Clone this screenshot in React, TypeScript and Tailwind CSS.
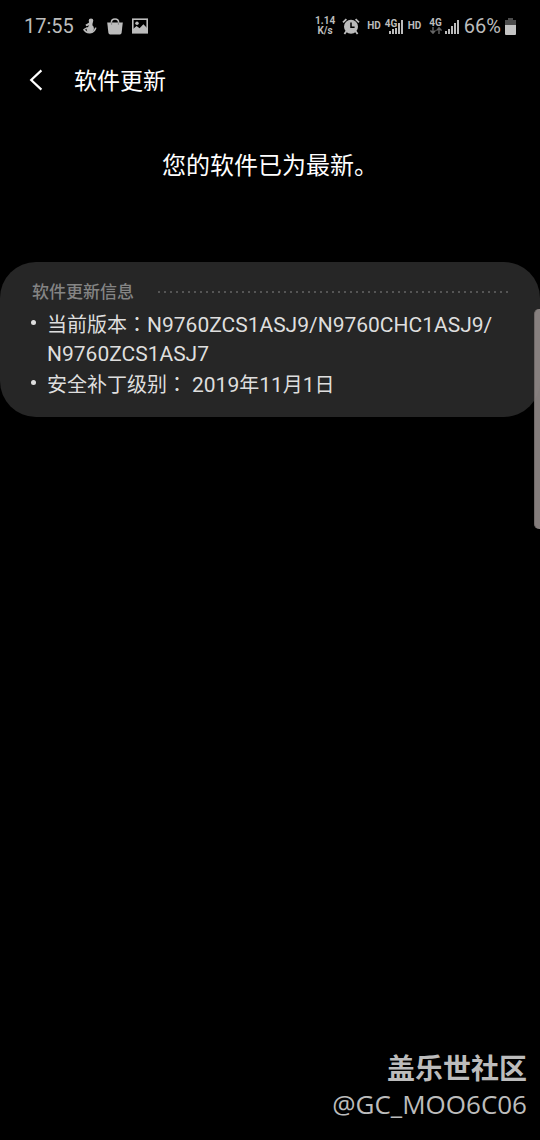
import type { ReactNode } from "react";

const signalBars = [3, 5, 8, 11, 14];

function MascotIcon() {
  return (
    <svg className="h-4 w-4" viewBox="0 0 16 16" fill="currentColor" aria-hidden="true">
      <circle cx="9" cy="2.8" r="2.3" />
      <path d="M7.4 3.6H10.8L10.4 7.2C12.2 8.6 12.6 11.6 10.8 13.6L8.6 15H7L5.2 13.6C4 11.8 4.6 9.8 6.4 8.6L7.2 7.2 4.4 8.2 3.4 6.8 6.8 4.8Z" />
      <path d="M1.8 11.4C4.2 15.8 12 16.2 13.8 9.6" fill="none" stroke="currentColor" strokeWidth="1.6" />
      <path d="M1.6 11.8 5.4 9.6" stroke="currentColor" strokeWidth="1.3" />
    </svg>
  );
}

function BagIcon() {
  return (
    <svg className="h-[17px] w-4" viewBox="0 0 16 17" fill="currentColor" aria-hidden="true">
      <path d="M0.2 4.4H15.8L14.6 14.8Q14.4 16.4 12.8 16.4H3.2Q1.6 16.4 1.4 14.8Z" />
      <path d="M4.4 6V4.2Q4.4 0.9 8 0.9T11.6 4.2V6" fill="none" stroke="currentColor" strokeWidth="1.5" />
      <path d="M4.6 4.4V6.8M11.4 4.4V6.8" stroke="#777" strokeWidth="0.8" />
    </svg>
  );
}

function PictureIcon() {
  return (
    <svg className="h-4 w-4" viewBox="0 0 16 16" fill="currentColor" aria-hidden="true">
      <rect x="0.8" y="1.2" width="14.4" height="13.6" fill="none" stroke="currentColor" strokeWidth="1.6" />
      <circle cx="5" cy="5.2" r="1.7" />
      <path d="M1 11 4.6 8 7.6 10.2 11.4 6.2 15 10V15H1Z" />
    </svg>
  );
}

function AlarmIcon() {
  return (
    <svg className="h-[17px] w-[18px]" viewBox="0 0 18 17" fill="currentColor" aria-hidden="true">
      <circle cx="9" cy="8.8" r="7" />
      <path d="M1 4.4 4.4 1.2M17 4.4 13.6 1.2M4.4 13.2 2.4 16M13.6 13.2 15.6 16" stroke="currentColor" strokeWidth="1.8" />
      <path d="M9 4.6V9.2H12.6" fill="none" stroke="#000" strokeWidth="1.5" />
    </svg>
  );
}

function SignalIcon() {
  return (
    <svg className="h-[14px] w-[14px]" viewBox="0 0 14 14" fill="currentColor" aria-hidden="true">
      {signalBars.map((height, index) => (
        <rect key={height} x={index * 3} y={14 - height} width="2" height={height} />
      ))}
    </svg>
  );
}

function DataArrowsIcon() {
  return (
    <svg className="h-[7px] w-[12px]" viewBox="0 0 12 7" fill="none" stroke="currentColor" strokeWidth="1.4" aria-hidden="true">
      <path d="M3 0V6M0.5 3.4 3 6.2 5.5 3.4M9 7V1M6.5 3.6 9 0.8 11.5 3.6" />
    </svg>
  );
}

function BatteryIcon() {
  return (
    <svg className="h-[17px] w-[11px]" viewBox="0 0 11 17" aria-hidden="true">
      <path d="M3 0H8V2H11V7H0V2H3Z" fill="#4c4c4c" />
      <path d="M0 7H11V16Q11 17 10 17H1Q0 17 0 16Z" fill="#c4c4c4" />
    </svg>
  );
}

function StatusBar() {
  return (
    <div className="flex h-[52px] items-center justify-between px-6 text-[#bcbcbc]">
      <div className="flex items-center">
        <span className="text-[20px] leading-6">17:55</span>
        <div className="ml-2 flex items-center gap-[9px]">
          <MascotIcon />
          <BagIcon />
          <PictureIcon />
        </div>
      </div>
      <div className="flex items-center">
        <div className="flex flex-col items-center text-[10px] font-bold leading-[10px]">
          <span>1.14</span>
          <span>K/s</span>
        </div>
        <div className="ml-[7px]">
          <AlarmIcon />
        </div>
        <span className="ml-[7px] text-[10px] font-bold leading-3">HD</span>
        <div className="relative ml-1 flex h-[15px] w-[18px] items-end justify-end">
          <SignalIcon />
          <span className="absolute left-0 top-0 bg-black text-[10px] font-bold leading-[9px]">4G</span>
        </div>
        <span className="ml-[5px] text-[10px] font-bold leading-3">HD</span>
        <div className="ml-2 flex h-4 items-end gap-[3px]">
          <div className="flex h-full flex-col items-center justify-between">
            <span className="text-[10px] font-bold leading-[9px]">4G</span>
            <span className="text-[#666666]">
              <DataArrowsIcon />
            </span>
          </div>
          <SignalIcon />
        </div>
        <span className="ml-[5px] text-[20px] leading-6">66%</span>
        <div className="ml-1">
          <BatteryIcon />
        </div>
      </div>
    </div>
  );
}

function Colon() {
  return <span className="font-['Noto_Sans_CJK_TC',sans-serif]" lang="zh-TW">：</span>;
}

function Latin({ children }: { children: ReactNode }) {
  return <span className="text-[21px]">{children}</span>;
}

function InfoItem({ children }: { children: ReactNode }) {
  return (
    <li className="flex gap-[11px]">
      <span className="mt-[11px] size-[5px] shrink-0 rounded-full bg-[#dedede]" />
      <span className="min-w-0">{children}</span>
    </li>
  );
}

export default function App() {
  return (
    <div lang="zh-CN" className="relative flex min-h-screen flex-col overflow-hidden bg-black font-['Roboto','Noto_Sans_CJK_SC',sans-serif] text-white">
      <StatusBar />
      <header className="flex h-14 items-center pl-7">
        <button type="button" aria-label="返回" className="flex h-8 w-[46px] items-center">
          <svg className="h-6 w-4" viewBox="0 0 16 24" fill="none" stroke="currentColor" strokeWidth="2.2" aria-hidden="true">
            <path d="M13.4 2.4 3.2 12 13.4 21.6" />
          </svg>
        </button>
        <h1 className="pt-1 text-[23px] leading-8">软件更新</h1>
      </header>
      <main>
        <p className="mt-[42px] text-center text-[24px] leading-8">您的软件已为最新。</p>
        <section className="mt-20 rounded-[36px] bg-[#262626] px-8 pb-[17px] pt-[18px]">
          <div className="flex items-center gap-6">
            <h2 className="text-[17px] font-medium leading-6 text-[#848484]">软件更新信息</h2>
            <div className="h-[2px] flex-1 bg-[repeating-linear-gradient(90deg,#555555_0_2px,transparent_2px_6px)]" />
          </div>
          <ul className="-ml-px mt-[5px] text-[20px] leading-[29px] text-[#dedede]">
            <InfoItem>
              当前版本<Colon /><Latin>N9760ZCS1ASJ9/<wbr />N9760CHC1ASJ9/<wbr />N9760ZCS1ASJ7</Latin>
            </InfoItem>
            <InfoItem>
              安全补丁级别<Colon /> <Latin>2019</Latin>年<Latin>11</Latin>月<Latin>1</Latin>日
            </InfoItem>
          </ul>
        </section>
      </main>
      <footer className="mt-auto pb-[18px] pr-[13px] text-right text-[#bcbcbc]">
        <p className="text-[28px] font-bold leading-[35px]">盖乐世社区</p>
        <p className="font-['Open_Sans',sans-serif] text-[26px] leading-[35px]">@GC_MOO6C06</p>
      </footer>
      <div className="absolute right-0 top-[309px] h-[220px] w-[6px] rounded-l-[5px] border-l border-[#6f6968] bg-[#928b89]/90" />
    </div>
  );
}
